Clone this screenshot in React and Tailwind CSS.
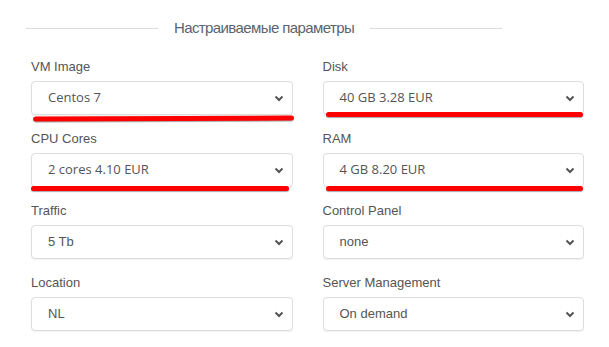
import React from 'react';

const fields = [
    { label: 'VM Image', value: 'Centos 7', marked: true, mark: 'top-[35px] left-[2px] -right-[1px] -rotate-[0.2deg]' },
    { label: 'Disk', value: '40 GB 3.28 EUR', marked: true, mark: 'top-[31px] left-[3px] right-[1px]' },
    { label: 'CPU Cores', value: '2 cores 4.10 EUR', marked: true, mark: 'top-[33px] left-0 right-[4px]' },
    { label: 'RAM', value: '4 GB 8.20 EUR', marked: true, mark: 'top-[33px] left-[3px] right-[1px]' },
    { label: 'Traffic', value: '5 Tb' },
    { label: 'Control Panel', value: 'none' },
    { label: 'Location', value: 'NL' },
    { label: 'Server Management', value: 'On demand' },
];

const Chevron = () => (
    <svg width="10" height="7" viewBox="0 0 10 7" className="shrink-0">
        <polyline points="1.5,1.5 5,5 8.5,1.5" fill="none" stroke="#555" strokeWidth="2" />
    </svg>
);

const Field = ({ label, value, marked, mark }) => (
    <div className="mb-[14px]">
        <div className="h-5 mb-1 text-[13px] leading-5 text-[#555] font-['Liberation_Sans',Arial,sans-serif]">{label}</div>
        <div className="relative">
            <div className="h-[34px] flex items-center justify-between pl-4 pr-[8px] bg-white border border-[#ddd] rounded-[4px] shadow-[0_1px_1px_rgba(0,0,0,0.06)]">
                <span
                    className={
                        marked
                            ? "text-[13px] text-[#555] font-['Open_Sans',sans-serif]"
                            : "text-[13px] text-[#555] font-['Liberation_Sans',Arial,sans-serif]"
                    }
                >
                    {value}
                </span>
                <Chevron />
            </div>
            {/* hand-drawn red marker under the chosen value */}
            {marked && (
                <div className={`absolute h-[5px] rounded-full bg-[#ff0000] shadow-[0_1px_1px_rgba(0,0,0,0.35)] ${mark}`} />
            )}
        </div>
    </div>
);

export default function App() {
    return (
        <div className="w-[609px] h-[347px] bg-white overflow-hidden">
            {/* Section heading */}
            <div className="ml-[26px] w-[476px] pt-[16px] flex items-center">
                <div className="flex-1 h-px bg-[#dcdcdc]" />
                <div className="px-4 text-[15px] leading-6 tracking-[-0.6px] text-[#5b6370] font-['Liberation_Sans',Arial,sans-serif]">
                    Настраиваемые параметры
                </div>
                <div className="flex-1 h-px bg-[#dcdcdc]" />
            </div>

            {/* Parameters */}
            <div className="mt-[17px] ml-[31px] w-[553px] grid grid-cols-2 gap-x-[30px]">
                {fields.map((f) => (
                    <Field key={f.label} {...f} />
                ))}
            </div>
        </div>
    );
}
